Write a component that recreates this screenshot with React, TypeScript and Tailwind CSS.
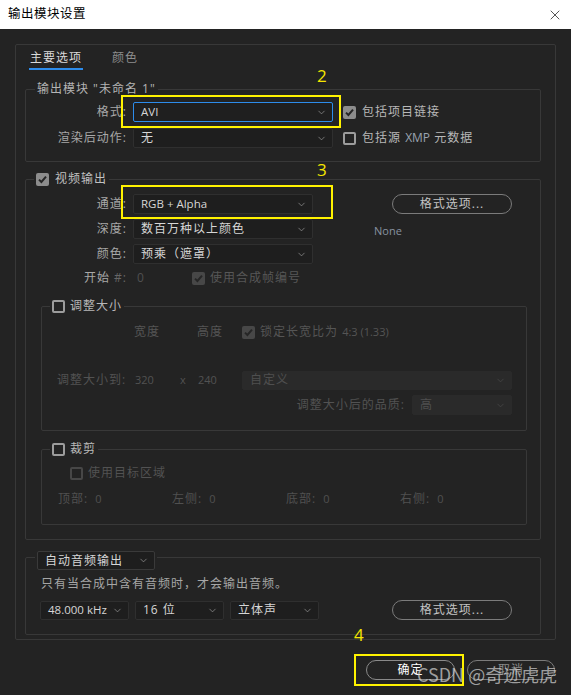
import { ChevronDown, X } from 'lucide-react'
import type { ReactNode } from 'react'

// Small building blocks for the dark settings dialog

function Check({ checked = false, disabled = false, className = '' }: { checked?: boolean; disabled?: boolean; className?: string }) {
  if (checked) {
    return (
      <span className={`flex h-[13px] w-[13px] shrink-0 items-center justify-center rounded-[2px] ${disabled ? 'bg-[#474747]' : 'bg-[#8c8c8c]'} ${className}`}>
        <svg width="11" height="11" viewBox="0 0 11 11">
          <path d="M2 5.6 L4.4 8 L9 2.6" fill="none" stroke="#262626" strokeWidth="2" />
        </svg>
      </span>
    )
  }
  return <span className={`block h-[13px] w-[13px] shrink-0 rounded-[2px] border-2 ${disabled ? 'border-[#474747]' : 'border-[#9c9c9c]'} ${className}`} />
}

function Select({
  value,
  width,
  h = 'h-[20px]',
  focus = false,
  disabled = false,
  latin = false,
  className = '',
}: {
  value: string
  width: string
  h?: string
  focus?: boolean
  disabled?: boolean
  latin?: boolean
  className?: string
}) {
  const tone = disabled
    ? 'bg-[#2a2a2a] border-[#2a2a2a] text-[#4f4f4f]'
    : focus
      ? 'bg-[#1f1f1f] border-[#2d8ceb] text-[#d6d6d6]'
      : 'bg-[#1e1e1e] border-[#2f2f2f] text-[#d6d6d6]'
  return (
    <div className={`flex shrink-0 items-center justify-between rounded-[2px] border pl-[7px] pr-[5px] ${h} ${tone} ${width} ${className}`}>
      <span className={`whitespace-nowrap leading-none ${latin ? 'text-[11.5px] tracking-normal' : 'text-[12px] tracking-[1px]'}`}>{value}</span>
      <ChevronDown size={11} strokeWidth={1.5} className={disabled ? 'text-[#4a4a4a]' : 'text-[#9a9a9a]'} />
    </div>
  )
}

function Pill({ children, className = '' }: { children: ReactNode; className?: string }) {
  return (
    <div className={`flex items-center justify-center rounded-full border-[1.5px] border-[#7b7b7b] text-[12px] leading-none tracking-[1px] ${className}`}>
      {children}
    </div>
  )
}

function Label({ children }: { children: ReactNode }) {
  return <span className="w-[101px] shrink-0 text-right tracking-[1px] text-[#a8a8a8]">{children}</span>
}

export default function App() {
  return (
    <div className="relative h-[695px] w-[571px] overflow-hidden bg-[#232323] font-['Open_Sans','Noto_Sans_CJK_SC',sans-serif] text-[12px]">
      {/* Title bar */}
      <div className="flex h-[29px] items-center justify-between bg-white pl-[8px] pr-[8px]">
        <span className="text-[12.5px] tracking-[0.5px] text-black">输出模块设置</span>
        <X size={16} strokeWidth={1} className="text-black" />
      </div>

      <div className="px-[15px] pt-[15px]">
        <div className="h-[596px] w-[541px] rounded-[2px] border border-[#383838]">
          {/* Tabs */}
          <div className="flex gap-[29px] pl-[13px] pt-[5px]">
            <div>
              <div className="h-[16px] px-[1px] leading-[16px] tracking-[1px] text-[#d9d9d9]">主要选项</div>
              <div className="mt-[2px] h-[2px] bg-[#2d8ceb]" />
            </div>
            <div className="h-[16px] leading-[16px] tracking-[1px] text-[#8e8e8e]">颜色</div>
          </div>

          {/* Output module */}
          <div className="ml-[9px] mt-[19px] h-[73px] w-[516px] rounded-[2px] border border-[#383838]">
            <div className="-mt-[9px] ml-[9px] h-[16px] w-fit bg-[#232323] px-[2px] leading-[16px] tracking-[1px] text-[#b4b4b4]">输出模块 "未命名 1"</div>
            <div className="mt-[5px] flex h-[20px] items-center">
              <Label>格式:</Label>
              <Select value="AVI" width="w-[200px]" focus latin className="ml-[6px]" />
              <Check checked className="ml-[10px]" />
              <span className="ml-[6px] tracking-[1px] text-[#b8b8b8]">包括项目链接</span>
            </div>
            <div className="mt-[6px] flex h-[20px] items-center">
              <Label>渲染后动作:</Label>
              <Select value="无" width="w-[200px]" className="ml-[6px]" />
              <Check className="ml-[10px]" />
              <span className="ml-[6px] tracking-[1px] text-[#b8b8b8]">
                包括源 <span className="tracking-normal text-[#9aa4b0]">XMP</span> 元数据
              </span>
            </div>
          </div>

          {/* Video output */}
          <div className="ml-[9px] mt-[17px] h-[361px] w-[516px] rounded-[2px] border border-[#383838]">
            <div className="-mt-[9px] ml-[8px] flex h-[16px] w-fit items-center bg-[#232323] px-[2px]">
              <Check checked />
              <span className="ml-[6px] tracking-[1px] text-[#c0c0c0]">视频输出</span>
            </div>
            <div className="mt-[7px] flex">
              <div className="flex flex-col gap-[5px]">
                <div className="flex h-[20px] items-center">
                  <Label>通道:</Label>
                  <Select value="RGB + Alpha" width="w-[180px]" latin className="ml-[6px]" />
                </div>
                <div className="flex h-[20px] items-center">
                  <Label>深度:</Label>
                  <Select value="数百万种以上颜色" width="w-[180px]" className="ml-[6px]" />
                </div>
                <div className="flex h-[20px] items-center">
                  <Label>颜色:</Label>
                  <Select value="预乘（遮罩）" width="w-[180px]" className="ml-[6px]" />
                </div>
              </div>
              <div className="ml-[61px]">
                <Pill className="ml-[18px] h-[20px] w-[120px] text-[#c4c4c4]">格式选项...</Pill>
                <div className="mt-[9px] h-[16px] text-[11px] leading-[16px] text-[#8792a0]">None</div>
              </div>
            </div>
            <div className="mt-[4px] flex h-[20px] items-center">
              <Label>
                开始 <span className="text-[#666]">#:</span>
              </Label>
              <span className="ml-[10px] w-[55px] text-[#505050]">0</span>
              <Check checked disabled />
              <span className="ml-[5px] tracking-[1px] text-[#575757]">使用合成帧编号</span>
            </div>

            {/* Resize */}
            <div className="ml-[15px] mt-[18px] h-[125px] w-[486px] rounded-[2px] border border-[#383838]">
              <div className="-mt-[9px] ml-[8px] flex h-[16px] w-fit items-center bg-[#232323] px-[2px]">
                <Check />
                <span className="ml-[5px] tracking-[1px] text-[#b8b8b8]">调整大小</span>
              </div>
              <div className="mt-[10px] flex h-[16px] items-center text-[#555]">
                <span className="ml-[92px] w-[63px] tracking-[1px]">宽度</span>
                <span className="w-[45px] tracking-[1px]">高度</span>
                <Check checked disabled />
                <span className="ml-[5px] tracking-[1px]">
                  锁定长宽比为 <span className="text-[11px] tracking-normal">4:3 (1.33)</span>
                </span>
              </div>
              <div className="mt-[30px] flex h-[20px] items-center text-[#525252]">
                <span className="ml-[15px] w-[78px] tracking-[1px]">调整大小到:</span>
                <span className="w-[45px] text-[11px]">320</span>
                <span className="w-[18px] text-[11px]">x</span>
                <span className="w-[44px] text-[11px]">240</span>
                <Select value="自定义" width="w-[270px]" h="h-[19px]" disabled />
              </div>
              <div className="mt-[5px] flex h-[20px] items-center justify-end pr-[14px] text-[#525252]">
                <span className="tracking-[1px]">调整大小后的品质:</span>
                <Select value="高" width="w-[100px]" disabled className="ml-[7px]" />
              </div>
            </div>

            {/* Crop */}
            <div className="ml-[15px] mt-[18px] h-[76px] w-[486px] rounded-[2px] border border-[#383838]">
              <div className="-mt-[9px] ml-[8px] flex h-[16px] w-fit items-center bg-[#232323] px-[2px]">
                <Check />
                <span className="ml-[5px] tracking-[1px] text-[#b8b8b8]">裁剪</span>
              </div>
              <div className="mt-[8px] flex h-[16px] items-center pl-[28px]">
                <Check disabled />
                <span className="ml-[5px] tracking-[1px] text-[#525252]">使用目标区域</span>
              </div>
              <div className="mt-[10px] flex h-[16px] items-center pl-[16px] text-[#505050]">
                {['顶部', '左侧', '底部', '右侧'].map((side) => (
                  <div key={side} className="flex w-[114px] items-center">
                    <span className="tracking-[1px]">{side}:</span>
                    <span className="ml-[7px] text-[11px]">0</span>
                  </div>
                ))}
              </div>
            </div>
          </div>

          {/* Audio */}
          <div className="ml-[9px] mt-[17px] h-[78px] w-[516px] rounded-[2px] border border-[#383838]">
            <div className="-mt-[7px] ml-[9px] w-fit bg-[#232323] px-[2px]">
              <Select value="自动音频输出" width="w-[118px]" h="h-[19px]" className="border-[#3a3a3a]" />
            </div>
            <div className="ml-[15px] mt-[6px] h-[16px] leading-[16px] tracking-[1px] text-[#a6a6a6]">只有当合成中含有音频时，才会输出音频。</div>
            <div className="ml-[14px] mt-[8px] flex items-center gap-[6px]">
              <Select value="48.000 kHz" width="w-[89px]" h="h-[19px]" latin />
              <Select value="16 位" width="w-[89px]" h="h-[19px]" />
              <Select value="立体声" width="w-[89px]" h="h-[19px]" />
              <Pill className="ml-[67px] h-[20px] w-[120px] text-[#c4c4c4]">格式选项...</Pill>
            </div>
          </div>
        </div>

        {/* Dialog buttons */}
        <div className="mt-[20px] flex justify-end gap-[12px] pr-[1px]">
          <Pill className="h-[20px] w-[89px] border-[#8a8a8a] text-white">确定</Pill>
          <Pill className="h-[20px] w-[88px] border-[#6a6a6a] text-[#8a8a8a]">取消</Pill>
        </div>
      </div>

      {/* Annotations drawn on top of the screenshot */}
      <div className="absolute left-[121px] top-[95px] h-[33px] w-[220px] border-2 border-[#fff200]" />
      <span className="absolute left-[317px] top-[67px] text-[17px] leading-none text-[#f5e600]">2</span>
      <div className="absolute left-[121px] top-[185px] h-[34px] w-[212px] border-2 border-[#fff200]" />
      <span className="absolute left-[317px] top-[161px] text-[17px] leading-none text-[#f5e600]">3</span>
      <div className="absolute left-[354px] top-[654px] h-[32px] w-[110px] border-2 border-[#fff200]" />
      <span className="absolute left-[354px] top-[626px] text-[17px] leading-none text-[#f5e600]">4</span>
      <span className="absolute left-[417px] top-[665px] font-['Noto_Sans_CJK_SC',sans-serif] text-[18px] leading-none text-[rgba(215,215,215,0.7)]">CSDN @奇迹虎虎</span>
    </div>
  )
}
